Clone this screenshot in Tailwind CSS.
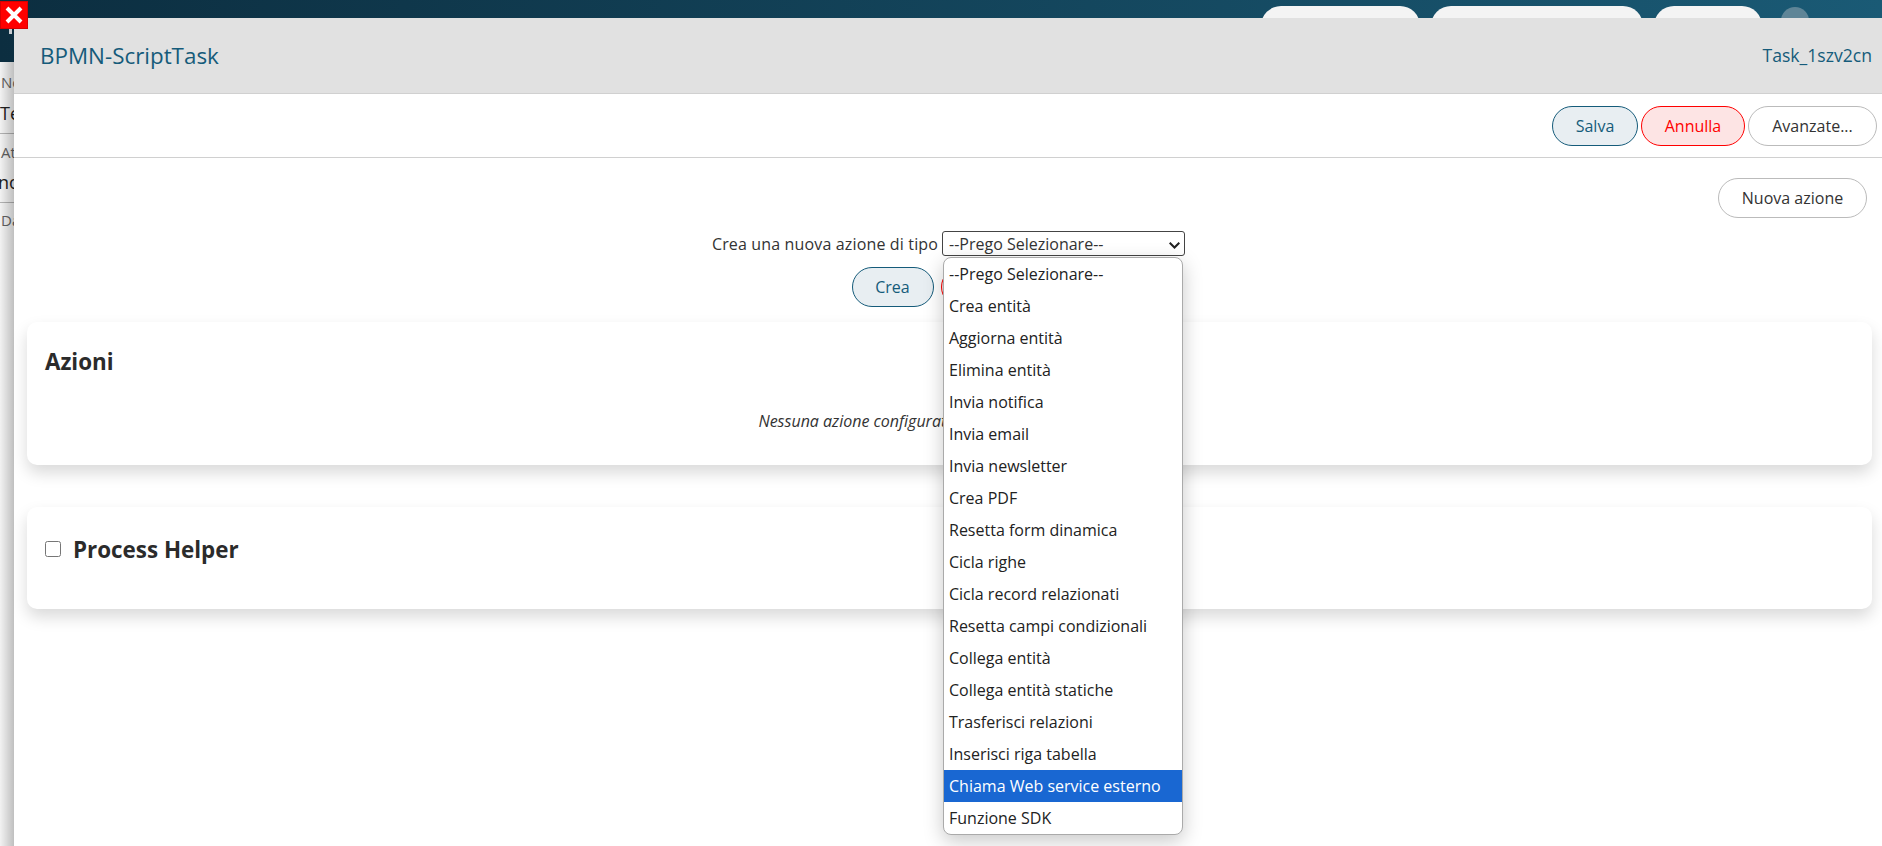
<!DOCTYPE html>
<html lang="it">
<head>
    <meta charset="UTF-8">
    <title>BPMN-ScriptTask</title>
    <script src="https://cdn.jsdelivr.net/npm/@tailwindcss/browser@4"></script>
</head>
<body class="relative h-[846px] w-[1882px] overflow-hidden bg-white font-['Open_Sans',sans-serif] text-[16px] text-[#333]">
    <!-- pagina dietro il modale -->
    <div class="h-[62px] bg-gradient-to-r from-[#0c2e40] to-[#1a5a75]">
        <div class="flex h-[62px] items-start justify-end gap-[11px] pt-[6px] pr-[73px]">
            <div class="h-[40px] w-[159px] rounded-[20px] bg-[#f4f4f4]"></div>
            <div class="h-[40px] w-[212px] rounded-[20px] bg-[#f4f4f4]"></div>
            <div class="h-[40px] w-[108px] rounded-[20px] bg-[#f4f4f4]"></div>
            <div class="ml-[8px] mt-[1px] h-[28px] w-[28px] rounded-full bg-[#5f8597]"></div>
        </div>
    </div>
    <div class="text-[#555]">
        <div class="h-[72px] border-b border-[#bbb] pl-[1px] pt-[9px]">
            <div class="text-[15px] leading-[22px] text-[#666]">Nome</div>
            <div class="mt-[8px] -ml-[1px] text-[18px] leading-[24px] text-[#222]">Test</div>
        </div>
        <div class="h-[69px] border-b border-[#bbb] pl-[1px] pt-[7px]">
            <div class="text-[15px] leading-[22px] text-[#666]">Attività</div>
            <div class="mt-[7px] -ml-[3px] text-[18px] leading-[24px] text-[#222]">nome</div>
        </div>
        <div class="pl-[1px] pt-[6px] text-[15px] leading-[22px] text-[#666]">Dati</div>
    </div>
    <div class="absolute left-0 top-[62px] h-[784px] w-[14px] bg-gradient-to-r from-black/5 to-black/25"></div>
    <div class="absolute left-[9px] top-[29px] h-[5px] w-[3px] bg-[#c8ccd0]"></div>

    <!-- modale -->
    <div class="absolute left-[14px] top-[18px] flex h-[828px] w-[1868px] flex-col bg-white">
        <div class="flex h-[76px] shrink-0 items-center justify-between border-b border-[#d0d0d0] bg-[#e1e1e1] pl-[26px] pr-[10px]">
            <span class="text-[22.4px] text-[#155b7a]">BPMN-ScriptTask</span>
            <span class="text-[17.6px] text-[#155b7a]">Task_1szv2cn</span>
        </div>
        <div class="flex h-[64px] shrink-0 items-start justify-end gap-[3px] border-b border-[#d0d0d0] pr-[5px] pt-[12px]">
            <button class="h-[40px] w-[86px] rounded-[20px] border border-[#155b7a] bg-[#e8eef2] text-[#155b7a]">Salva</button>
            <button class="h-[40px] w-[104px] rounded-[20px] border border-[#f00] bg-[#fde4e4] text-[#f00]">Annulla</button>
            <button class="h-[40px] w-[129px] rounded-[20px] border border-[#bbb] bg-white text-[#333]">Avanzate...</button>
        </div>
        <div class="flex justify-end pr-[15px] pt-[20px]">
            <button class="h-[40px] w-[149px] rounded-[20px] border border-[#bbb] bg-white text-[#333]">Nuova azione</button>
        </div>
        <div class="flex items-center justify-center pl-[1px] pt-[13px]">
            <span class="mr-[4px] tracking-[0.15px]">Crea una nuova azione di tipo</span>
            <div class="relative">
                <select class="block h-[25px] w-[243px] appearance-none rounded-[3px] border border-[#444] bg-white pl-[6px] text-[16px]">
                    <option>--Prego Selezionare--</option>
                </select>
                <svg class="absolute right-[5px] top-[11px]" width="11" height="7" viewBox="0 0 11 7"><path d="M0.7 0.7 L5.5 5.5 L10.3 0.7" stroke="#222" stroke-width="2" fill="none"/></svg>
            </div>
        </div>
        <div class="flex justify-center gap-[7px] pt-[11px]">
            <button class="h-[40px] w-[82px] rounded-[20px] border border-[#155b7a] bg-[#e8eef2] text-[#155b7a]">Crea</button>
            <button class="h-[40px] w-[104px] rounded-[20px] border border-[#f00] bg-[#fde4e4] text-[#f00]">Annulla</button>
        </div>
        <div class="ml-[13px] mr-[10px] mt-[15px] h-[143px] rounded-[10px] bg-white pl-[18px] pt-[23px] shadow-[0_8px_16px_rgba(0,0,0,0.15)]">
            <h2 class="text-[22.4px] font-bold leading-[34px] text-[#2b2b2b]">Azioni</h2>
            <p class="mt-[30px] text-center italic">Nessuna azione configurata per questo script task BPMN</p>
        </div>
        <div class="ml-[13px] mr-[10px] mt-[42px] flex h-[102px] items-start rounded-[10px] bg-white pl-[18px] pt-[26px] shadow-[0_8px_16px_rgba(0,0,0,0.15)]">
            <input type="checkbox" class="mt-[8px] h-[16px] w-[16px]">
            <h2 class="ml-[12px] text-[22.4px] font-bold leading-[34px] text-[#2b2b2b]">Process Helper</h2>
        </div>
    </div>

    <!-- chiudi -->
    <div class="absolute left-0 top-[1px] flex h-[28px] w-[28px] items-center justify-center border border-[#d80000] bg-[#f00]">
        <svg width="20" height="20" viewBox="0 0 20 20"><path d="M3 3 L17 17 M17 3 L3 17" stroke="#fff" stroke-width="4" fill="none"/></svg>
    </div>

    <!-- tendina aperta -->
    <div class="absolute left-[943px] top-[257px] w-[240px] overflow-hidden rounded-[8px] border border-[#aaa] bg-white text-[#222] shadow-[0_6px_20px_rgba(0,0,0,0.22)]">
        <div class="flex h-[32px] items-center pl-[5px]">--Prego Selezionare--</div>
        <div class="flex h-[32px] items-center pl-[5px]">Crea entità</div>
        <div class="flex h-[32px] items-center pl-[5px]">Aggiorna entità</div>
        <div class="flex h-[32px] items-center pl-[5px]">Elimina entità</div>
        <div class="flex h-[32px] items-center pl-[5px]">Invia notifica</div>
        <div class="flex h-[32px] items-center pl-[5px]">Invia email</div>
        <div class="flex h-[32px] items-center pl-[5px]">Invia newsletter</div>
        <div class="flex h-[32px] items-center pl-[5px]">Crea PDF</div>
        <div class="flex h-[32px] items-center pl-[5px]">Resetta form dinamica</div>
        <div class="flex h-[32px] items-center pl-[5px]">Cicla righe</div>
        <div class="flex h-[32px] items-center pl-[5px]">Cicla record relazionati</div>
        <div class="flex h-[32px] items-center pl-[5px]">Resetta campi condizionali</div>
        <div class="flex h-[32px] items-center pl-[5px]">Collega entità</div>
        <div class="flex h-[32px] items-center pl-[5px]">Collega entità statiche</div>
        <div class="flex h-[32px] items-center pl-[5px]">Trasferisci relazioni</div>
        <div class="flex h-[32px] items-center pl-[5px]">Inserisci riga tabella</div>
        <div class="flex h-[32px] items-center bg-[#1967d2] pl-[5px] text-white">Chiama Web service esterno</div>
        <div class="flex h-[32px] items-center pl-[5px]">Funzione SDK</div>
    </div>
</body>
</html>
